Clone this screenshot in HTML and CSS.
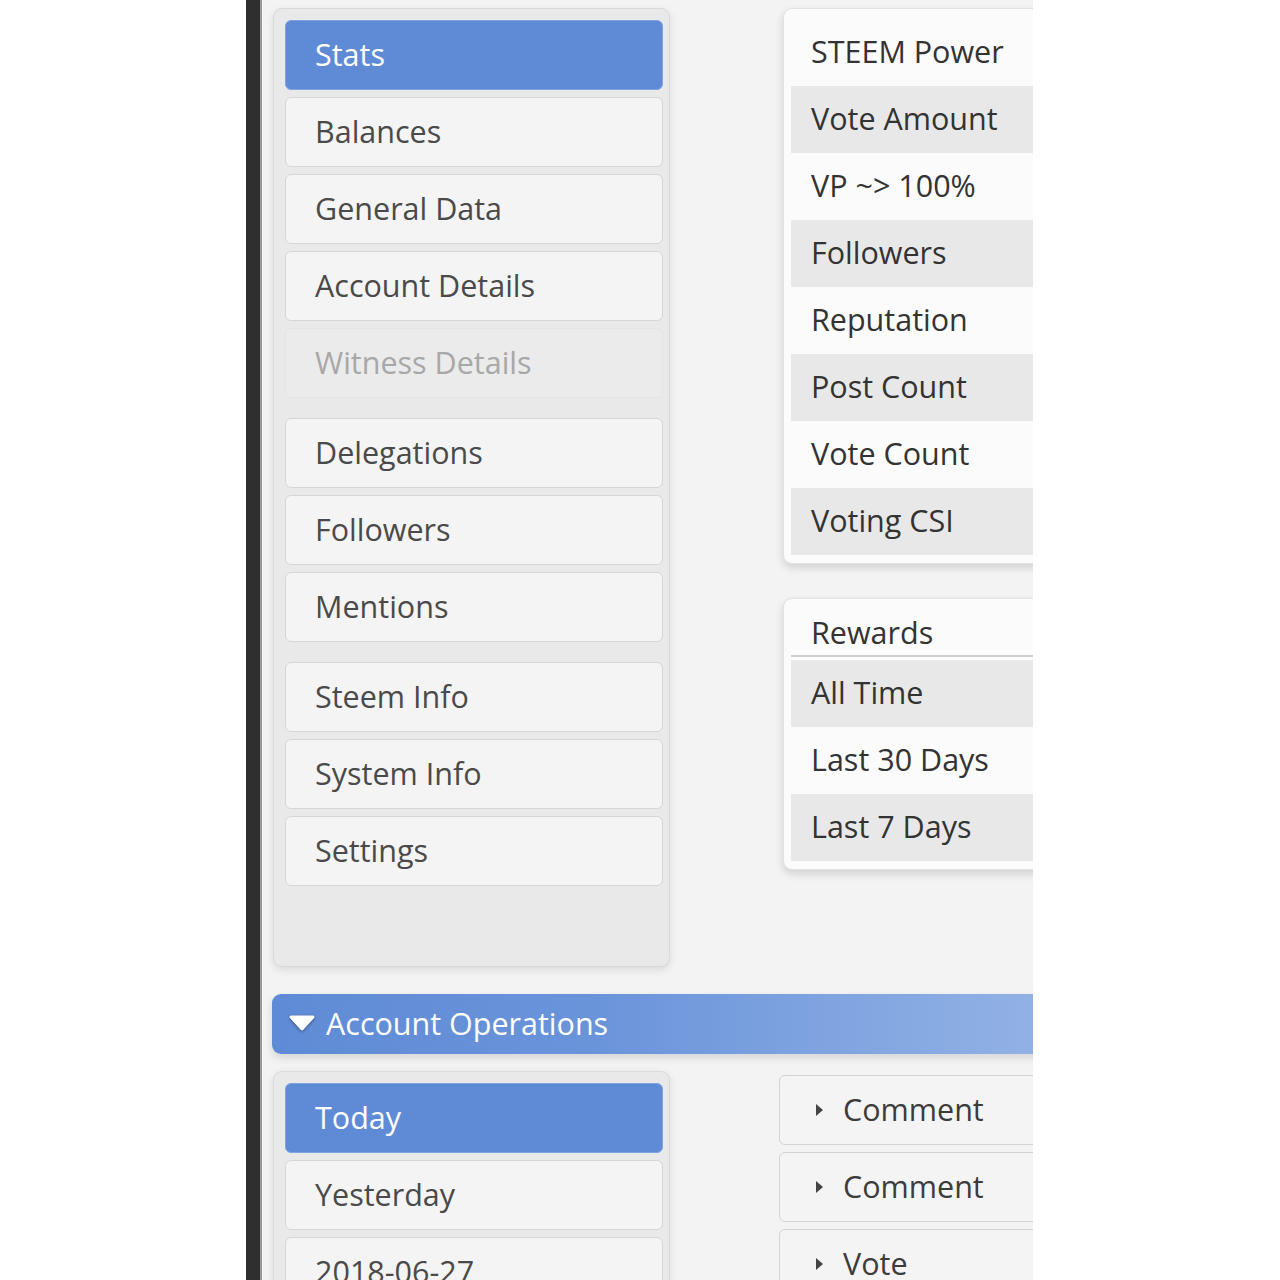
FILE: index.html
```html
<!DOCTYPE html>
<html lang="en">
<head>
<meta charset="utf-8">
<title>Steem Stats</title>
<link rel="stylesheet" href="styles.css">
</head>
<body>
<div class="page">
  <div class="gutter"></div>
  <div class="rail"></div>
  <main class="main">
    <section class="top">
      <nav class="panel menu">
        <div class="btn active">Stats</div>
        <div class="btn">Balances</div>
        <div class="btn">General Data</div>
        <div class="btn">Account Details</div>
        <div class="btn disabled">Witness Details</div>
        <div class="btn group-start">Delegations</div>
        <div class="btn">Followers</div>
        <div class="btn">Mentions</div>
        <div class="btn group-start">Steem Info</div>
        <div class="btn">System Info</div>
        <div class="btn">Settings</div>
      </nav>
      <div class="side">
        <div class="card stats-card">
          <div class="row">STEEM Power</div>
          <div class="row alt">Vote Amount</div>
          <div class="row">VP ~&gt; 100%</div>
          <div class="row alt">Followers</div>
          <div class="row">Reputation</div>
          <div class="row alt">Post Count</div>
          <div class="row">Vote Count</div>
          <div class="row alt">Voting CSI</div>
        </div>
        <div class="card rewards-card">
          <div class="row head">Rewards</div>
          <div class="row alt">All Time</div>
          <div class="row">Last 30 Days</div>
          <div class="row alt">Last 7 Days</div>
        </div>
      </div>
    </section>

    <div class="section-bar">
      <svg class="caret" width="30" height="18" viewBox="0 0 30 18" aria-hidden="true">
        <polygon points="4,3 26,3 15,15" fill="#ffffff" stroke="#ffffff" stroke-width="3" stroke-linejoin="round"/>
      </svg>
      <span>Account Operations</span>
    </div>

    <section class="ops">
      <nav class="panel menu days">
        <div class="btn active">Today</div>
        <div class="btn">Yesterday</div>
        <div class="btn">2018-06-27</div>
      </nav>
      <div class="ops-list">
        <div class="op"><span class="tri"></span>Comment</div>
        <div class="op"><span class="tri"></span>Comment</div>
        <div class="op"><span class="tri"></span>Vote</div>
      </div>
    </section>
  </main>
</div>
</body>
</html>
```

FILE: styles.css
```css
* { box-sizing: border-box; }

html, body {
  margin: 0;
  padding: 0;
  background: #ffffff;
}

body {
  font-family: "Open Sans", "Noto Sans", "Liberation Sans", sans-serif;
  font-size: 30.5px;
  color: #444;
}

.page {
  display: flex;
  height: 1280px;
  overflow: hidden;
}

.gutter {
  width: 246px;
  flex-shrink: 0;
  background: #ffffff;
}

.rail {
  width: 16px;
  flex-shrink: 0;
  background: #2f2f2f;
  border-right: 2px solid #9a9a9a;
}

.main {
  width: 771px;
  flex-shrink: 0;
  background: #f3f3f3;
  overflow: hidden;
  padding: 8px 0 0 11px;
}

.top {
  display: flex;
  align-items: flex-start;
  gap: 113px;
}

/* Left menus */
.panel {
  width: 397px;
  flex-shrink: 0;
  background: #e9e9e9;
  border: 1px solid #dadada;
  border-radius: 9px;
  box-shadow: 0 3px 8px rgba(0, 0, 0, 0.10);
}

.menu {
  display: flex;
  flex-direction: column;
  gap: 7px;
  padding: 11px 6px 80px 11px;
}

.btn {
  height: 70px;
  display: flex;
  align-items: center;
  padding-left: 29px;
  padding-bottom: 2px;
  background: #f4f4f4;
  border: 1px solid #d6d6d6;
  border-radius: 6px;
  color: #4a4a4a;
  line-height: 1;
  white-space: nowrap;
}

.btn.active {
  background: #5f8bd6;
  border-color: #7fa3e0;
  color: #ffffff;
}

.btn.disabled {
  background: #ebebeb;
  border-color: #e4e4e4;
  color: #a8a8a8;
}

.btn.group-start {
  margin-top: 13px;
}

.days {
  padding-bottom: 60px;
}

/* Right cards */
.side {
  width: 320px;
  flex-shrink: 0;
  display: flex;
  flex-direction: column;
  gap: 34px;
}

.card {
  background: #fbfbfb;
  border: 1px solid #e2e2e2;
  border-radius: 9px;
  box-shadow: 0 4px 9px rgba(0, 0, 0, 0.14);
  padding: 10px 0 8px 7px;
}

.row {
  height: 67px;
  display: flex;
  align-items: center;
  padding-left: 20px;
  padding-bottom: 3px;
  color: #333333;
  background: #fbfbfb;
  white-space: nowrap;
  line-height: 1;
}

.row.alt {
  background: #e8e8e8;
}

.rewards-card .row.head {
  height: 48px;
  border-bottom: 2px solid #cfcfcf;
  margin-bottom: 3px;
  padding-bottom: 0;
}

/* Section bar */
.section-bar {
  margin-top: 27px;
  margin-left: -1px;
  width: 800px;
  height: 60px;
  display: flex;
  align-items: center;
  gap: 9px;
  padding-left: 15px;
  padding-bottom: 2px;
  border-radius: 9px 0 0 9px;
  background: linear-gradient(to right, #5f8bd6 0%, #6a94da 40%, #95b4e6 100%);
  box-shadow: 0 4px 8px rgba(0, 0, 0, 0.12);
  color: #ffffff;
  white-space: nowrap;
}

.caret {
  flex-shrink: 0;
  filter: drop-shadow(0 1px 1.5px rgba(0, 0, 0, 0.45));
}

/* Operations */
.ops {
  margin-top: 17px;
  display: flex;
  align-items: flex-start;
  gap: 109px;
}

.ops-list {
  margin-top: 4px;
  width: 320px;
  flex-shrink: 0;
  display: flex;
  flex-direction: column;
  gap: 7px;
}

.op {
  height: 70px;
  display: flex;
  align-items: center;
  padding-left: 36px;
  padding-bottom: 2px;
  background: #f4f4f4;
  border: 1px solid #d3d3d3;
  border-radius: 6px;
  color: #3c3c3c;
  white-space: nowrap;
  line-height: 1;
}

.tri {
  width: 0;
  height: 0;
  border-top: 6px solid transparent;
  border-bottom: 6px solid transparent;
  border-left: 7px solid #444;
  margin-right: 20px;
  margin-top: 2px;
}
```
